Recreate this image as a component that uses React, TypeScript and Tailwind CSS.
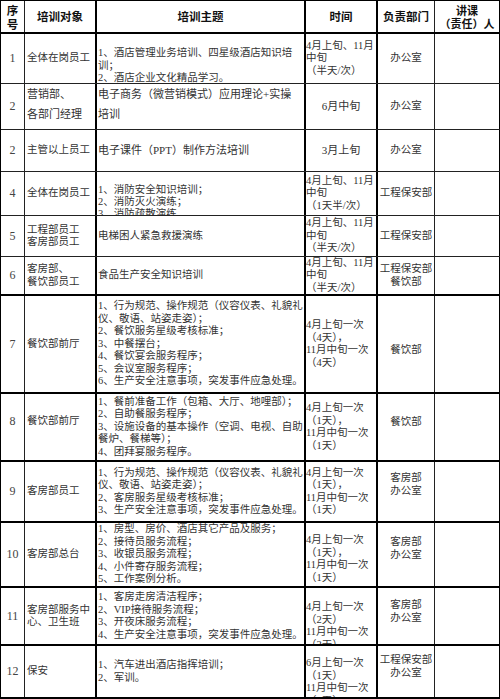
import React from "react";

type Row = {
  h: string;
  line: string;
  no: string;
  noCls?: string;
  target: string[];
  targetCls?: string;
  topic: string[];
  topicCls?: string;
  time: string[];
  timeCls?: string;
  dept: string[];
  deptCls?: string;
};

const rows: Row[] = [
  {
    h: "h-[50px]",
    line: "border-b border-[#222]",
    no: "1",
    target: ["全体在岗员工"],
    topic: ["1、酒店管理业务培训、四星级酒店知识培", "训；", "2、酒店企业文化精品学习。"],
    topicCls: "justify-start pt-[13px]",
    time: ["4月上旬、11月", "中旬", "（半天/次）"],
    dept: ["办公室"],
  },
  {
    h: "h-[46px]",
    line: "border-b border-[#222]",
    no: "2",
    target: ["营销部、", "各部门经理"],
    targetCls: "justify-start leading-[20px] text-[11px]",
    topic: ["电子商务（微营销模式）应用理论+实操", "培训"],
    topicCls: "justify-start leading-[20px] text-[11px]",
    time: ["6月中旬"],
    timeCls: "justify-center items-center text-[11px]",
    dept: ["办公室"],
  },
  {
    h: "h-[42px]",
    line: "border-b border-[#222]",
    no: "2",
    target: ["主管以上员工"],
    topic: ["电子课件（PPT）制作方法培训"],
    topicCls: "justify-center text-[11px]",
    time: ["3月上旬"],
    timeCls: "justify-center items-center text-[11px]",
    dept: ["办公室"],
  },
  {
    h: "h-[44px]",
    line: "border-b border-[#222]",
    no: "4",
    target: ["全体在岗员工"],
    topic: ["1、消防安全知识培训；", "2、消防灭火演练；", "3、消防疏散演练"],
    topicCls: "justify-start pt-[12px] leading-[12px]",
    time: ["4月上旬、11月", "中旬", "（1天半/次）"],
    dept: ["工程保安部"],
  },
  {
    h: "h-[41px]",
    line: "border-b border-[#222]",
    no: "5",
    target: ["工程部员工", "客房部员工"],
    topic: ["电梯困人紧急救援演练"],
    time: ["4月上旬、11月", "中旬", "（半天/次）"],
    dept: ["工程保安部"],
  },
  {
    h: "h-[39px]",
    line: "border-b-2 border-black",
    no: "6",
    target: ["客房部、", "餐饮部员工"],
    topic: ["食品生产安全知识培训"],
    time: ["4月上旬、11月", "中旬", "（半天/次）"],
    dept: ["工程保安部", "餐饮部"],
  },
  {
    h: "h-[98px]",
    line: "border-b-2 border-black",
    no: "7",
    target: ["餐饮部前厅"],
    topic: [
      "1、行为规范、操作规范（仪容仪表、礼貌礼",
      "仪、敬语、站姿走姿）；",
      "2、餐饮服务星级考核标准；",
      "3、中餐摆台；",
      "4、餐饮宴会服务程序；",
      "5、会议室服务程序；",
      "6、生产安全注意事项，突发事件应急处理。",
    ],
    time: ["4月上旬一次", "（4天），", "11月中旬一次", "（4天）"],
    dept: ["餐饮部"],
    deptCls: "justify-start pt-[48px]",
  },
  {
    h: "h-[68px]",
    line: "border-b-2 border-black",
    no: "8",
    noCls: "justify-start pt-[21px]",
    target: ["餐饮部前厅"],
    targetCls: "justify-start pt-[21px]",
    topic: [
      "1、餐前准备工作（包箱、大厅、地哩部）；",
      "2、自助餐服务程序；",
      "3、设施设备的基本操作（空调、电视、自助",
      "餐炉、餐梯等）；",
      "4、团拜宴服务程序。",
    ],
    time: ["4月上旬一次", "（1天），", "11月中旬一次", "（1天）"],
    dept: ["餐饮部"],
    deptCls: "justify-start pt-[22px]",
  },
  {
    h: "h-[61px]",
    line: "border-b-2 border-black",
    no: "9",
    target: ["客房部员工"],
    topic: [
      "1、行为规范、操作规范（仪容仪表、礼貌礼",
      "仪、敬语、站姿走姿）；",
      "2、客房服务星级考核标准；",
      "3、生产安全注意事项，突发事件应急处理。",
    ],
    time: ["4月上旬一次", "（1天），", "11月中旬一次", "（1天）"],
    dept: ["客房部", "办公室"],
    deptCls: "justify-start pt-[10px]",
  },
  {
    h: "h-[65px]",
    line: "border-b-2 border-black",
    no: "10",
    target: ["客房部总台"],
    topic: [
      "1、房型、房价、酒店其它产品及服务；",
      "2、接待员服务流程；",
      "3、收银员服务流程；",
      "4、小件寄存服务流程；",
      "5、工作案例分析。",
    ],
    time: ["4月上旬一次", "（1天），", "11月中旬一次", "（1天）"],
    timeCls: "justify-start pt-[11px]",
    dept: ["客房部", "办公室"],
    deptCls: "justify-start pt-[13px]",
  },
  {
    h: "h-[58px]",
    line: "border-b-2 border-black",
    no: "11",
    target: ["客房部服务中", "心、卫生班"],
    topic: [
      "1、客房走房清洁程序；",
      "2、VIP接待服务流程；",
      "3、开夜床服务流程；",
      "4、生产安全注意事项，突发事件应急处理。",
    ],
    time: ["4月上旬一次", "（2天）", "11月中旬一次", "（2天）"],
    timeCls: "justify-start pt-[13px]",
    dept: ["客房部", "办公室"],
    deptCls: "justify-start pt-[11px]",
  },
  {
    h: "h-[53px]",
    line: "border-b-2 border-black",
    no: "12",
    target: ["保安"],
    topic: ["1、汽车进出酒店指挥培训；", "2、军训。"],
    time: ["6月上旬一次", "（1天）", "11月中旬一次", "（1天）"],
    timeCls: "justify-start pt-[11px]",
    dept: ["工程保安部", "办公室"],
    deptCls: "justify-start pt-[8px]",
  },
];

function Lines({ lines }: { lines: string[] }) {
  return (
    <>
      {lines.map((l, i) => (
        <div key={i} className="whitespace-nowrap">
          {l}
        </div>
      ))}
    </>
  );
}

export default function App() {
  return (
    <div className="w-[500px] h-[699px] bg-white overflow-hidden">
      <div className="w-[500px] border-l border-t border-black font-['Liberation_Serif','Noto_Sans_CJK_SC',serif] text-[#333] text-[10.5px] leading-[12.5px]">
        {/* header */}
        <div className="flex h-[33px] border-b-2 border-black font-['Noto_Sans_CJK_SC',sans-serif] font-bold text-[11.5px] text-[#111]">
          <div className="w-[24px] border-r border-[#222] flex items-center justify-center text-center leading-[14px]">
            <p>序<br />号</p>
          </div>
          <div className="w-[72px] border-r-2 border-black flex items-center justify-center">培训对象</div>
          <div className="w-[209px] border-r-2 border-black flex items-center justify-center">培训主题</div>
          <div className="w-[72px] border-r-2 border-black flex items-center justify-center">时间</div>
          <div className="w-[57px] border-r border-[#222] flex items-center justify-center">负责部门</div>
          <div className="w-[65px] border-r border-black flex items-center justify-center text-center leading-[13px] text-[11px]">
            <p className="whitespace-nowrap">讲课<br />（责任）人</p>
          </div>
        </div>

        {rows.map((r, i) => (
          <div key={i} className={`flex ${r.h} ${r.line}`}>
            <div className={`w-[24px] border-r border-[#222] flex flex-col items-center overflow-hidden text-[12px] text-[#444] ${r.noCls ?? "justify-center"}`}>
              {r.no}
            </div>
            <div className={`w-[72px] border-r-2 border-black flex flex-col pl-[2px] overflow-hidden ${r.targetCls ?? "justify-center"}`}>
              <Lines lines={r.target} />
            </div>
            <div className={`w-[209px] border-r-2 border-black flex flex-col pl-[1px] overflow-hidden ${r.topicCls ?? "justify-center"}`}>
              <Lines lines={r.topic} />
            </div>
            <div className={`w-[72px] border-r-2 border-black flex flex-col overflow-hidden ${r.timeCls ?? "justify-center"}`}>
              <Lines lines={r.time} />
            </div>
            <div className={`w-[57px] border-r border-[#222] flex flex-col items-center overflow-hidden ${r.deptCls ?? "justify-center"}`}>
              <Lines lines={r.dept} />
            </div>
            <div className="w-[65px] border-r border-black" />
          </div>
        ))}
      </div>
    </div>
  );
}
